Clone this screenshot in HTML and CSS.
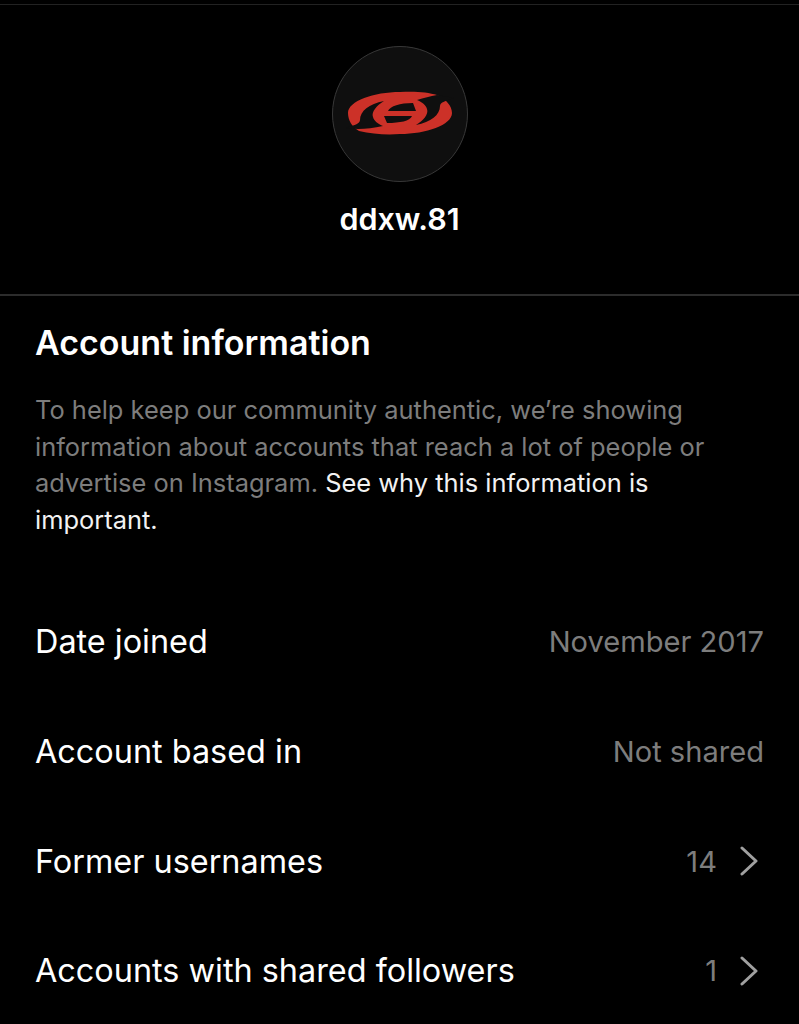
FILE: index.html
```html
<!DOCTYPE html>
<html lang="en">
<head>
    <meta charset="UTF-8">
    <title>About this account</title>
    <link rel="stylesheet" href="styles.css">
</head>
<body>
<div class="top-line"></div>
<div class="profile">
    <div class="avatar">
        <svg class="logo" viewBox="0 0 120 60" width="120" height="60">
            <path class="logo-red" d="M8 29C8 17 34 8 60 8C74 7 88 8 97 11C106 15 112 22 112 29C112 41 86 50 60 50C46 51 32 50 19 47C12 43 8 36 8 29Z"/>
            <path class="logo-cut" d="M6 44C14 41 20 40 20 36C20 27 29 20 44 17C37 21 31 28 33 33C34 37 38 40 43 42C34 44 26 45 18 45Z"/>
            <path class="logo-cut" d="M114 14C106 17 100 18 100 22C100 31 91 38 76 41C83 37 89 30 87 25C86 21 82 18 77 16C84 14 90 12 97 11Z"/>
            <path class="logo-cut" d="M48 27C50 22 60 19 73 19L76 27Z"/>
            <path class="logo-cut" d="M72 32C70 37 60 39 47 39L44 32Z"/>
        </svg>
    </div>
    <div class="username">ddxw.81</div>
</div>
<div class="info">
    <h2 class="info-title">Account information</h2>
    <p class="info-text">To help keep our community authentic, we’re showing information about accounts that reach a lot of people or advertise on Instagram. <span class="info-link">See why this information is important.</span></p>
</div>
<div class="rows">
    <div class="row"><span class="row-label">Date joined</span><span class="row-value">November 2017</span></div>
    <div class="row"><span class="row-label">Account based in</span><span class="row-value">Not shared</span></div>
    <div class="row"><span class="row-label">Former usernames</span><span class="row-value">14<svg class="chevron" viewBox="0 0 20 30" width="20" height="30"><path d="M4 2L18 15L4 28"/></svg></span></div>
    <div class="row"><span class="row-label">Accounts with shared followers</span><span class="row-value">1<svg class="chevron" viewBox="0 0 20 30" width="20" height="30"><path d="M4 2L18 15L4 28"/></svg></span></div>
</div>
</body>
</html>
```

FILE: styles.css
```css
* {
    margin: 0;
    padding: 0;
    box-sizing: border-box;
}

body {
    height: 1024px;
    overflow: hidden;
    background: #000;
    color: #fff;
    font-family: Inter, "Liberation Sans", sans-serif;
}

.top-line {
    margin-top: 4px;
    height: 1px;
    background: #222;
}

.profile {
    display: flex;
    flex-direction: column;
    align-items: center;
    height: 291px;
    padding-top: 41px;
    border-bottom: 2px solid #2c2c2c;
}

.avatar {
    display: flex;
    align-items: center;
    justify-content: center;
    width: 136px;
    height: 136px;
    border: 1.500px solid #383838;
    border-radius: 50%;
    background: #0f0f0f;
}

.logo-red {
    fill: #cc3128;
}

.logo-cut {
    fill: #0f0f0f;
}

.username {
    margin-top: 20px;
    font-size: 30.500px;
    font-weight: 600;
    line-height: 34px;
}

.info {
    padding: 27px 35px 0;
}

.info-title {
    font-size: 34px;
    font-weight: 600;
    line-height: 40px;
}

.info-text {
    margin-top: 29px;
    font-size: 25.450px;
    line-height: 36.500px;
    color: #7d7d7d;
}

.info-link {
    color: #f2f2f2;
}

.rows {
    padding: 49px 35px 0;
}

.row {
    display: flex;
    align-items: center;
    justify-content: space-between;
    height: 109.700px;
}

.row-label {
    font-size: 32.400px;
}

.row-value {
    display: flex;
    align-items: center;
    gap: 21px;
    font-size: 29.100px;
    color: #7d7d7d;
}

.chevron {
    margin-right: 6px;
    fill: none;
    stroke: #a0a0a0;
    stroke-width: 3;
    stroke-linecap: round;
    stroke-linejoin: round;
}
```
